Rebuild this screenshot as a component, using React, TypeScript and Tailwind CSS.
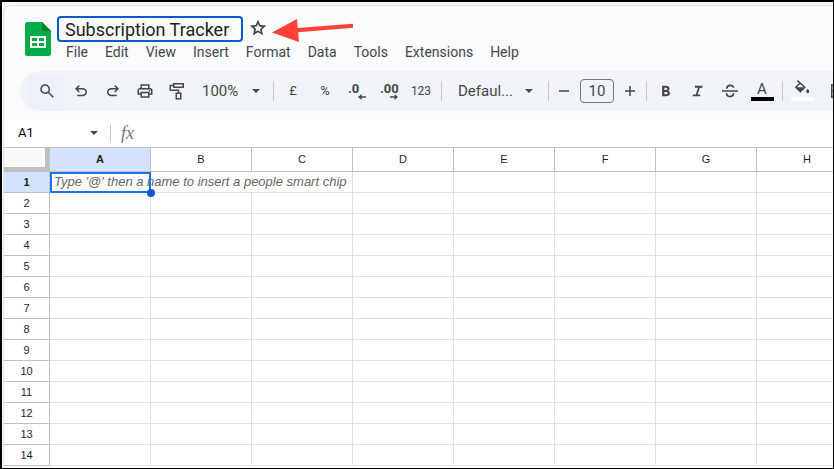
import type { ReactNode } from "react";

const MENUS = ["File", "Edit", "View", "Insert", "Format", "Data", "Tools", "Extensions", "Help"];
const COLUMNS = ["A", "B", "C", "D", "E", "F", "G", "H"];
const ROWS = Array.from({ length: 14 }, (_, i) => i + 1);

function ToolButton({ label, children }: { label: string; children: ReactNode }) {
  return (
    <button aria-label={label} className="w-8 h-8 shrink-0 flex items-center justify-center rounded hover:bg-black/5">
      {children}
    </button>
  );
}

function Divider() {
  return <div className="w-px h-5 ml-1 mr-[3px] shrink-0 bg-[#c7c7c7]" />;
}

function Caret() {
  return (
    <svg className="w-2 h-1 pointer-events-none" viewBox="0 0 8 4" fill="currentColor">
      <path d="M0 0h8L4 4z" />
    </svg>
  );
}

function Symbol({ d, className = "w-[18px] h-[18px]" }: { d: string; className?: string }) {
  return (
    <svg className={className} viewBox="0 -960 960 960" fill="currentColor">
      <path d={d} />
    </svg>
  );
}

function SheetsLogo() {
  return (
    <svg className="w-[26px] h-[34px] mt-[6px] shrink-0" viewBox="0 0 26 34">
      <path d="M2.5 0H17l9 9v22.500a2.500 2.500 0 0 1-2.500 2.500h-21A2.500 2.500 0 0 1 0 31.500v-29A2.500 2.500 0 0 1 2.500 0z" fill="#00ac47" />
      <path d="M17 0l9 9h-9z" fill="#00832d" />
      <path d="M5 14h16v12H5zM7 16v3h5v-3zm7 0v3h5v-3zm-7 5v3h5v-3zm7 0v3h5v-3z" fill="#fff" fillRule="evenodd" />
    </svg>
  );
}

function Header() {
  return (
    <header className="relative flex gap-[6px] pl-[21px] pt-[10px]">
      <SheetsLogo />
      <div>
        <div className="flex items-center gap-[5px] h-[26px]">
          <input
            aria-label="Document name"
            defaultValue="Subscription Tracker"
            className="w-[186px] h-[26px] px-[6px] border-2 border-[#0b57d0] rounded bg-[#f9fbfd] text-lg leading-[22px] text-[#1f1f1f] outline-none"
          />
          <button aria-label="Star" className="pb-1">
            <Symbol
              className="w-5 h-5 text-[#444746]"
              d="m354-247 126-76 126 77-33-144 111-96-146-13-58-136-58 135-146 13 111 97-33 143ZM233-80l65-281L80-550l288-25 112-265 112 265 288 25-218 189 65 281-247-149L233-80Z"
            />
          </button>
        </div>
        <nav className="flex h-5 pl-[9px] gap-[17px] text-[#444746]">
          {MENUS.map((m) => (
            <button key={m} className="text-[14px] leading-5">{m}</button>
          ))}
        </nav>
      </div>
      <svg className="absolute left-[268px] top-[13px] w-[82px] h-6" viewBox="0 0 82 24" fill="#ff4136">
        <path d="M0 13.500L25 0l.7 9L81 4.800v4L26.200 13.300 27 23z" />
      </svg>
    </header>
  );
}

function Toolbar() {
  return (
    <div className="flex items-center h-10 ml-4 mt-[9px] mb-2 pl-2 rounded-l-full bg-[#f0f4f9] text-[#444746] overflow-hidden">
      <button aria-label="Search the menus" className="w-[37px] h-8 shrink-0 flex items-center justify-center bg-[#edf2fa]">
        <Symbol d="M784-120 532-372q-30 24-69 38t-83 14q-109 0-184.500-75.500T120-580q0-109 75.500-184.500T380-840q109 0 184.500 75.500T640-580q0 44-14 83t-38 69l252 252-56 56ZM380-400q75 0 127.500-52.500T560-580q0-75-52.500-127.500T380-760q-75 0-127.500 52.500T200-580q0 75 52.500 127.500T380-400Z" />
      </button>
      <ToolButton label="Undo">
        <Symbol d="M280-200v-80h284q63 0 109.500-40T720-420q0-60-46.500-100T564-560H312l104 104-56 56-200-200 200-200 56 56-104 104h252q97 0 166.500 63T800-420q0 94-69.500 157T564-200H280Z" />
      </ToolButton>
      <ToolButton label="Redo">
        <Symbol d="M396-200q-97 0-166.500-63T160-420q0-94 69.500-157T396-640h252L544-744l56-56 200 200-200 200-56-56 104-104H396q-63 0-109.500 40T240-420q0 60 46.500 100T396-280h284v80H396Z" />
      </ToolButton>
      <ToolButton label="Print">
        <Symbol d="M640-640v-120H320v120h-80v-200h480v200h-80Zm80 180q17 0 28.500-11.500T760-500q0-17-11.500-28.500T720-540q-17 0-28.500 11.500T680-500q0 17 11.500 28.500T720-460Zm-80 260v-160H320v160h320Zm80 80H240v-160H80v-240q0-51 35-85.500t85-34.500h560q51 0 85.500 34.500T880-520v240H720v160Zm80-240v-160q0-17-11.500-28.500T760-560H200q-17 0-28.500 11.500T160-520v160h80v-80h480v80h80Z" />
      </ToolButton>
      <ToolButton label="Paint format">
        <svg className="w-[18px] h-[18px]" viewBox="0 0 18 18" fill="none" stroke="currentColor" strokeWidth="1.500">
          <path d="M5.750 1.750h9.500v3.500h-9.500zM5.750 3.500h-3.500v4.750h8.250v3M8.250 11.250h4.500v5.500h-4.500z" />
        </svg>
      </ToolButton>
      <div className="relative w-[76px] shrink-0">
        <select aria-label="Zoom" className="w-full h-8 pl-[9px] appearance-none bg-transparent text-[15px] outline-none">
          <option>100%</option>
        </select>
        <span className="absolute right-[9px] top-[14px]"><Caret /></span>
      </div>
      <Divider />
      <ToolButton label="Format as currency"><span className="text-[13px]">£</span></ToolButton>
      <ToolButton label="Format as percent"><span className="text-[13px]">%</span></ToolButton>
      <ToolButton label="Decrease decimal places">
        <span className="relative text-[13px] leading-5 h-6 w-[18px] text-left font-bold">
          .0
          <svg className="absolute right-0 bottom-[3px] w-2 h-[6px]" viewBox="0 0 8 6" fill="currentColor">
            <path d="M0 3L3.500 0v2.200H8v1.600H3.500V6z" />
          </svg>
        </span>
      </ToolButton>
      <ToolButton label="Increase decimal places">
        <span className="relative text-[13px] leading-5 h-6 w-[18px] text-left font-bold">
          .00
          <svg className="absolute right-0 bottom-[3px] w-2 h-[6px]" viewBox="0 0 8 6" fill="currentColor">
            <path d="M8 3L4.500 0v2.200H0v1.600h4.500V6z" />
          </svg>
        </span>
      </ToolButton>
      <ToolButton label="More formats"><span className="text-xs">123</span></ToolButton>
      <Divider />
      <div className="relative w-[99px] shrink-0">
        <select aria-label="Font" className="w-full h-8 pl-[13px] appearance-none bg-transparent text-[15px] outline-none">
          <option>Defaul...</option>
        </select>
        <span className="absolute right-[11px] top-[14px]"><Caret /></span>
      </div>
      <Divider />
      <button aria-label="Decrease font size" className="w-6 h-6 shrink-0 flex items-center justify-center">
        <svg className="w-3 h-3" viewBox="0 0 12 12" stroke="currentColor" strokeWidth="1.500"><path d="M1 6h10" /></svg>
      </button>
      <input
        aria-label="Font size"
        defaultValue="10"
        className="w-[34px] h-6 mx-1 shrink-0 border border-[#747775] rounded bg-transparent text-center text-[15px] outline-none"
      />
      <button aria-label="Increase font size" className="w-6 h-6 shrink-0 flex items-center justify-center">
        <svg className="w-3 h-3" viewBox="0 0 12 12" stroke="currentColor" strokeWidth="1.500"><path d="M1 6h10M6 1v10" /></svg>
      </button>
      <Divider />
      <ToolButton label="Bold">
        <Symbol d="M272-200v-560h221q65 0 120 40t55 111q0 51-23 78.500T602-491q25 11 55.500 41t30.500 90q0 89-65 124.500T501-200H272Zm121-112h104q48 0 58.500-24.500T566-372q0-11-10.500-35.500T494-432H393v120Zm0-228h93q33 0 48-17t15-38q0-24-17-39t-44-15h-95v109Z" />
      </ToolButton>
      <ToolButton label="Italic">
        <Symbol d="M200-200v-100h160l120-360H320v-100h400v100H580L460-300h140v100H200Z" />
      </ToolButton>
      <ToolButton label="Strikethrough">
        <svg className="w-[18px] h-[18px]" viewBox="0 0 18 18" fill="none" stroke="currentColor">
          <path d="M1 9h16" strokeWidth="1.400" />
          <path d="M5.700 6.700c0-4.200 6.800-4.200 6.800-1M5.500 11.300c0 4.300 7 4.300 7 0" strokeWidth="1.700" />
        </svg>
      </ToolButton>
      <ToolButton label="Text colour">
        <span className="w-[23px] h-6 mb-1 border-b-4 border-black text-[15px] leading-6">A</span>
      </ToolButton>
      <Divider />
      <ToolButton label="Fill colour">
        <span className="w-[23px] h-6 mb-1 pt-[3px] border-b-4 border-white flex justify-center">
          <svg className="w-4 h-4" viewBox="0 0 16 16">
            <path d="M3.400.6L10.800 7.200 6.300 11.700 1.800 7.200 6.300 3" fill="none" stroke="currentColor" strokeWidth="1.500" />
            <path d="M1.800 7.200h9L6.300 11.800zM13.700 8.800s1.500 1.700 1.500 2.600a1.500 1.500 0 0 1-3 0c0-.9 1.500-2.600 1.500-2.600z" fill="currentColor" />
          </svg>
        </span>
      </ToolButton>
      <button aria-label="Borders" className="w-8 h-8 ml-1 shrink-0 flex items-center justify-center">
        <svg className="w-4 h-4" viewBox="0 0 16 16" fill="none" stroke="currentColor" strokeWidth="1.500">
          <path d="M1.750 1.750h12.500v12.500H1.750zM8 2v12M2 8h12" />
        </svg>
      </button>
    </div>
  );
}

function FormulaBar() {
  return (
    <div className="flex items-center h-[29px] bg-white border-b border-[#c0c0c0] shrink-0">
      <input aria-label="Name box" defaultValue="A1" className="w-20 pl-[14px] text-[13px] text-black outline-none" />
      <button aria-label="Named ranges" className="w-5 h-5 flex items-center justify-center text-[#444746]">
        <Caret />
      </button>
      <div className="w-px h-[17px] ml-[6px] mr-[10px] bg-[#c7c7c7]" />
      <label htmlFor="formula" className="font-['Liberation_Serif',serif] italic text-[18px] leading-5 text-[#747775]">fx</label>
      <input id="formula" className="flex-1 min-w-0 px-2 text-[13px] outline-none" />
    </div>
  );
}

function Grid() {
  return (
    <table className="w-[854px] table-fixed border-separate border-spacing-0 bg-white font-['Liberation_Sans',sans-serif] text-[11px] leading-4 text-[#1f1f1f]">
      <thead>
        <tr className="h-6">
          <th className="w-[46px] p-0 border-r-5 border-b-5 border-[#c0c0c0] bg-[#f8f9fa]" />
          {COLUMNS.map((c) => (
            <th
              key={c}
              className={`w-[101px] p-0 pb-[2px] border-r border-b border-[#c0c0c0] ${c === "A" ? "bg-[#d3e3fd] font-bold" : "font-normal"}`}
            >
              {c}
            </th>
          ))}
        </tr>
      </thead>
      <tbody>
        {ROWS.map((r) => (
          <tr key={r} className="h-[21px]">
            <th className={`p-0 border-r border-b border-[#c0c0c0] ${r === 1 ? "bg-[#d3e3fd] font-bold" : "font-normal"}`}>{r}</th>
            {COLUMNS.map((c) =>
              r === 1 && c === "A" ? (
                <td key={c} className="relative p-0 border-b border-[#e1e1e1]">
                  <div className="absolute left-0 top-0 w-[302px] h-5 pl-1 overflow-hidden whitespace-nowrap italic text-[13px] leading-5 text-[#666]">
                    Type '@' then a name to insert a people smart chip
                  </div>
                  <div className="absolute left-0 top-0 w-full h-[21px] border-2 border-[#1a73e8]" />
                  <div className="absolute -right-1 -bottom-[5px] w-2 h-2 rounded-full bg-[#0b57d0]" />
                </td>
              ) : (
                <td key={c} className={`p-0 border-b border-[#e1e1e1] ${r === 1 && c === "B" ? "" : "border-r"}`} />
              )
            )}
          </tr>
        ))}
      </tbody>
    </table>
  );
}

export default function App() {
  return (
    <div className="h-screen border-t-2 border-l-2 border-r border-b border-black bg-[#f8f8f8] pt-[3px] pl-px overflow-hidden font-[Roboto,sans-serif]">
      <div className="h-full flex flex-col border-t border-l border-[#e3e5e8] rounded-tl-lg bg-[#f9fbfd] overflow-hidden">
        <Header />
        <Toolbar />
        <FormulaBar />
        <main className="flex-1 min-h-0 bg-white overflow-hidden">
          <Grid />
        </main>
      </div>
    </div>
  );
}
